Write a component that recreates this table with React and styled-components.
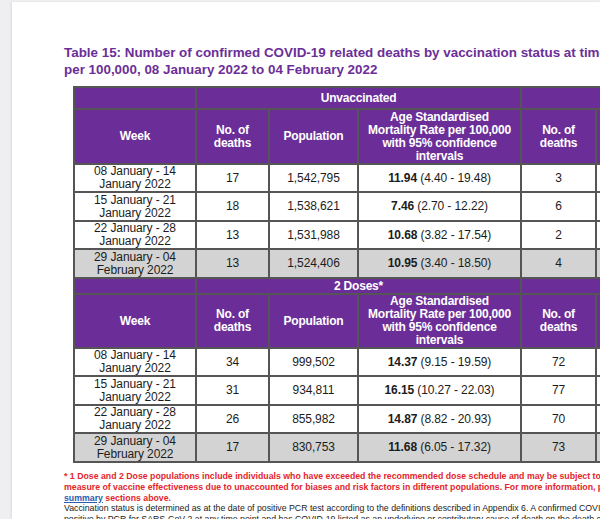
import React from "react";
import styled, { createGlobalStyle } from "styled-components";

const PURPLE = "#6b2e98";
const FONT = '"Liberation Sans", Arial, sans-serif';

const Global = createGlobalStyle`
  html, body { margin: 0; padding: 0; }
  body { background: #efeff2; font-family: ${FONT}; }
`;

const Viewport = styled.div`
  display: flex;
  width: 600px;
  height: 519px;
  overflow: hidden;
  padding-top: 2px;
  box-sizing: border-box;
`;

const Gutter = styled.div`
  flex: 0 0 12px;
  background: #efeff2;
`;

const Page = styled.div`
  flex: 1;
  min-width: 0;
  background: #ffffff;
  box-shadow: -1px 0 2px rgba(0, 0, 0, 0.08);
  padding: 42px 0 0 52px;
  overflow: hidden;
`;

const Title = styled.h2`
  margin: 0 0 8px;
  font-family: ${FONT};
  font-size: 13.4px;
  line-height: 17px;
  font-weight: bold;
  color: ${PURPLE};
  white-space: nowrap;
`;

const Table = styled.table`
  margin-left: 9px;
  width: 1101px;
  border-collapse: collapse;
  table-layout: fixed;
  font-family: ${FONT};
`;

const Row = styled.tr`
  height: ${(p) => p.$h}px;
  background: ${(p) => (p.$grey ? "#d3d3d3" : "#ffffff")};
`;

const Head = styled.th`
  background: ${PURPLE};
  color: #ffffff;
  border: 2px solid #555;
  font-size: 12px;
  letter-spacing: -0.2px;
  line-height: 13px;
  font-weight: bold;
  text-align: center;
  padding: 0 2px;
  vertical-align: middle;
  white-space: nowrap;
`;

const Cell = styled.td`
  border: 2px solid #555;
  color: #1c1c1c;
  font-size: 12px;
  letter-spacing: -0.1px;
  line-height: 13px;
  text-align: center;
  padding: 0 2px;
  vertical-align: middle;
  white-space: nowrap;
`;

const Strong = styled.b`
  font-weight: bold;
`;

const Notes = styled.div`
  margin-top: 8px;
  font-family: ${FONT};
  font-size: 8.75px;
  line-height: 10.8px;
  white-space: nowrap;
`;

const Warn = styled.div`
  color: #e3262c;
  font-weight: bold;
`;

const Link = styled.a`
  color: #2b5cb0;
  text-decoration: underline;
`;

const Plain = styled.div`
  color: #222;
`;

const cols = [122, 73, 89, 163, 75, 89, 163, 75, 89, 163];

const sections = [
  {
    groups: ["Unvaccinated", "1 Dose*", "3 Doses"],
    groupH: 22,
    headH: 55,
    rows: [
      ["08 January - 14", "January 2022", "17", "1,542,795", "11.94", "(4.40 - 19.48)", "3", "318,436", "2.84", "(0.00 - 6.12)"],
      ["15 January - 21", "January 2022", "18", "1,538,621", "7.46", "(2.70 - 12.22)", "6", "312,775", "4.12", "(0.42 - 7.82)"],
      ["22 January - 28", "January 2022", "13", "1,531,988", "10.68", "(3.82 - 17.54)", "2", "305,317", "1.95", "(0.00 - 4.66)"],
      ["29 January - 04", "February 2022", "13", "1,524,406", "10.95", "(3.40 - 18.50)", "4", "298,840", "3.10", "(0.05 - 6.15)"],
    ],
  },
  {
    groups: ["2 Doses*", "3 Doses", "4 Doses"],
    groupH: 16,
    headH: 54,
    rows: [
      ["08 January - 14", "January 2022", "34", "999,502", "14.37", "(9.15 - 19.59)", "72", "3,412,560", "4.05", "(3.11 - 4.99)"],
      ["15 January - 21", "January 2022", "31", "934,811", "16.15", "(10.27 - 22.03)", "77", "3,468,390", "4.21", "(3.25 - 5.17)"],
      ["22 January - 28", "January 2022", "26", "855,982", "14.87", "(8.82 - 20.93)", "70", "3,517,204", "3.76", "(2.87 - 4.65)"],
      ["29 January - 04", "February 2022", "17", "830,753", "11.68", "(6.05 - 17.32)", "73", "3,560,118", "3.89", "(2.99 - 4.79)"],
    ],
  },
];

const rowHeights = [28, 29, 28, 29];

function Section({ s }) {
  return (
    <>
      <Row $h={s.groupH}>
        <Head />
        {s.groups.map((g) => (
          <Head key={g} colSpan={3}>{g}</Head>
        ))}
      </Row>
      <Row $h={s.headH}>
        <Head>Week</Head>
        {s.groups.map((g) => (
          <React.Fragment key={g}>
            <Head>No. of<br />deaths</Head>
            <Head>Population</Head>
            <Head>
              Age Standardised<br />Mortality Rate per 100,000<br />with 95% confidence<br />intervals
            </Head>
          </React.Fragment>
        ))}
      </Row>
      {s.rows.map((r, i) => (
        <Row key={i} $h={rowHeights[i]} $grey={i === 3}>
          <Cell>{r[0]}<br />{r[1]}</Cell>
          <Cell>{r[2]}</Cell>
          <Cell>{r[3]}</Cell>
          <Cell><Strong>{r[4]}</Strong> {r[5]}</Cell>
          <Cell>{r[6]}</Cell>
          <Cell>{r[7]}</Cell>
          <Cell><Strong>{r[8]}</Strong> {r[9]}</Cell>
          <Cell>{r[6]}</Cell>
          <Cell>{r[7]}</Cell>
          <Cell><Strong>{r[8]}</Strong> {r[9]}</Cell>
        </Row>
      ))}
    </>
  );
}

export default function App() {
  return (
    <>
      <Global />
      <Viewport>
        <Gutter />
        <Page>
          <Title>
            Table 15: Number of confirmed COVID-19 related deaths by vaccination status at time of death and age standardised mortality rates
            <br />
            per 100,000, 08 January 2022 to 04 February 2022
          </Title>
          <Table>
            <colgroup>
              {cols.map((w, i) => (
                <col key={i} style={{ width: w }} />
              ))}
            </colgroup>
            <tbody>
              {sections.map((s, i) => (
                <Section key={i} s={s} />
              ))}
            </tbody>
          </Table>
          <Notes>
            <Warn>* 1 Dose and 2 Dose populations include individuals who have exceeded the recommended dose schedule and may be subject to additional biases. These data should not be used as a</Warn>
            <Warn>measure of vaccine effectiveness due to unaccounted for biases and risk factors in different populations. For more information, please see the main points and</Warn>
            <Warn><Link href="#summary">summary</Link> sections above.</Warn>
            <Plain>Vaccination status is determined as at the date of positive PCR test according to the definitions described in Appendix 6. A confirmed COVID-19 death is defined as an individual who has tested</Plain>
            <Plain>positive by PCR for SARS-CoV-2 at any time point and has COVID-19 listed as an underlying or contributory cause of death on the death certificate.</Plain>
          </Notes>
        </Page>
      </Viewport>
    </>
  );
}
